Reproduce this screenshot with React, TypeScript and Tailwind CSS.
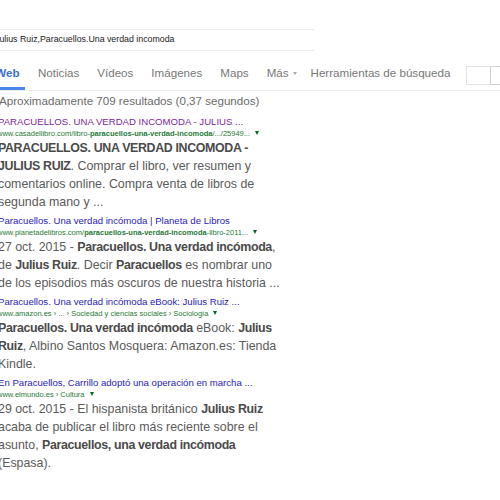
import React from "react";

function Arrow() {
  return (
    <span className="inline-block ml-[5px] align-middle w-0 h-0 border-l-[2.5px] border-r-[2.5px] border-t-[4px] border-l-transparent border-r-transparent border-t-[#006621] relative top-[-1px]" />
  );
}

function Result({
  title,
  visited,
  url,
  children,
}: {
  title: string;
  visited?: boolean;
  url: React.ReactNode;
  children: React.ReactNode;
}) {
  return (
    <div className="flex flex-col">
      <div
        className={`text-[9.6px] leading-[13px] whitespace-nowrap ${
          visited ? "text-[#7a1f9a]" : "text-[#2a22b8]"
        }`}
      >
        {title}
      </div>
      <div className="text-[7.5px] leading-[11px] text-[#1f7a36] whitespace-nowrap ml-[-1px]">
        {url}
        <Arrow />
      </div>
      <div className="text-[12.4px] leading-[18px] text-[#5a5a5a] w-[284px]">
        {children}
      </div>
    </div>
  );
}

const B = ({ children }: { children: React.ReactNode }) => (
  <b className="font-bold text-[#4a4a4a] tracking-[-0.35px]">{children}</b>
);

export default function App() {
  return (
    <div className="w-[500px] h-[500px] overflow-hidden bg-white font-['Liberation_Sans',Arial,sans-serif]">
      <div className="h-[29px]" />
      <div className="w-[314px] h-[22px] border-y border-[#ebebeb] flex items-center">
        <span className="ml-[-5px] text-[8.8px] text-[#222] whitespace-nowrap">
          Julius Ruiz,Paracuellos.Una verdad incomoda
        </span>
      </div>
      <div className="mt-[11px] flex items-start h-[28px] text-[11.6px] leading-[14px] text-[#777] whitespace-nowrap">
        <div className="shrink-0 ml-[-10px] w-[35px] h-[28px] pt-[4px] flex justify-center border-b-[3px] border-[#4a86e8] text-[#3b6fd8] font-bold">
          Web
        </div>
        <div className="shrink-0 ml-[13px] pt-[4px]">Noticias</div>
        <div className="shrink-0 ml-[18px] pt-[4px]">Vídeos</div>
        <div className="shrink-0 ml-[18px] pt-[4px]">Imágenes</div>
        <div className="shrink-0 ml-[18px] pt-[4px]">Maps</div>
        <div className="shrink-0 ml-[18px] pt-[4px] flex items-center">
          Más
          <span className="inline-block ml-[4px] w-0 h-0 border-l-[2px] border-r-[2px] border-t-[3px] border-l-transparent border-r-transparent border-t-[#aaa]" />
        </div>
        <div className="shrink-0 ml-[14px] pt-[4px]">Herramientas de búsqueda</div>
        <div className="shrink-0 ml-[16px] mt-[4px] w-[24px] h-[19px] border border-[#e2e2e2] border-r-0" />
        <div className="shrink-0 mt-[4px] w-[30px] h-[19px] border border-[#cfcfcf]" />
      </div>
      <div className="h-px bg-[#ececec]" />
      <div className="mt-[2px] ml-[-1px] text-[11.6px] leading-[16px] text-[#6a6a6a] whitespace-nowrap">
        Aproximadamente 709 resultados (0,37 segundos)
      </div>
      <div className="mt-[6px] ml-[-2px] flex flex-col gap-[3px]">
        <Result
          visited
          title="PARACUELLOS. UNA VERDAD INCOMODA - JULIUS ..."
          url={
            <>
              www.casadellibro.com/libro-<b>paracuellos-una-verdad-incomoda</b>/.../25949...
            </>
          }
        >
          <B>PARACUELLOS. UNA VERDAD INCOMODA - JULIUS RUIZ</B>. Comprar el libro, ver
          resumen y comentarios online. Compra venta de libros de segunda mano y ...
        </Result>
        <Result
          title="Paracuellos. Una verdad incómoda | Planeta de Libros"
          url={
            <>
              www.planetadelibros.com/<b>paracuellos-una-verdad-incomoda</b>-libro-2011...
            </>
          }
        >
          27 oct. 2015 - <B>Paracuellos. Una verdad incómoda</B>, de <B>Julius Ruiz</B>.
          Decir <B>Paracuellos</B> es nombrar uno de los episodios más oscuros de nuestra
          historia ...
        </Result>
        <Result
          title="Paracuellos. Una verdad incómoda eBook: Julius Ruiz ..."
          url={<>www.amazon.es › ... › Sociedad y ciencias sociales › Sociología</>}
        >
          <B>Paracuellos. Una verdad incómoda</B> eBook: <B>Julius Ruiz</B>, Albino Santos
          Mosquera: Amazon.es: Tienda Kindle.
        </Result>
        <Result
          title="En Paracuellos, Carrillo adoptó una operación en marcha ..."
          url={<>www.elmundo.es › Cultura</>}
        >
          29 oct. 2015 - El hispanista británico <B>Julius Ruiz</B> acaba de publicar el
          libro más reciente sobre el asunto, <B>Paracuellos, una verdad incómoda</B>{" "}
          (Espasa).
        </Result>
      </div>
    </div>
  );
}
